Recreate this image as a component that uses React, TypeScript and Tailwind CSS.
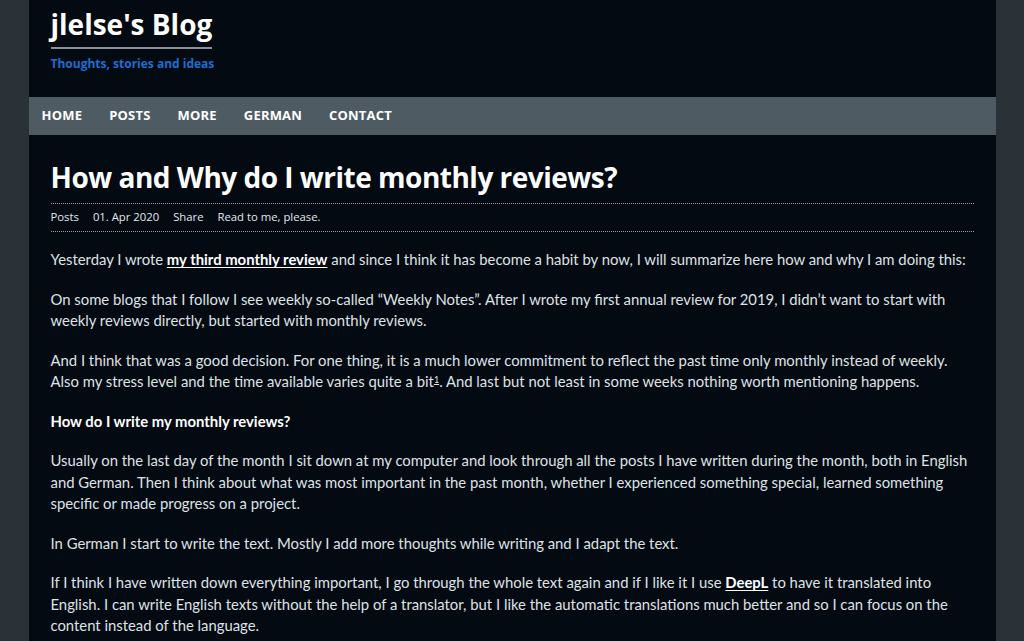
import React from 'react';

const navItems = ['Home', 'Posts', 'More', 'German', 'Contact'];

const A: React.FC<{ children: React.ReactNode }> = ({ children }) => (
  <a href="#" className="font-bold text-white underline underline-offset-2">
    {children}
  </a>
);

export default function App() {
  return (
    <div
      className="min-h-[641px] bg-[#2a3237] text-[#dfe2e5]"
      style={{ fontFamily: '"Open Sans", "Noto Sans", sans-serif' }}
    >
      <div className="mx-auto w-[967px] min-h-[641px] bg-[#030a12]">
        {/* header */}
        <header className="h-[97px] px-[22px] pt-[8px]">
          <a href="#" className="inline-block border-b-2 border-[#8a9096] pb-[6px] text-[28px] font-bold leading-[33px] text-white">
            jlelse's Blog
          </a>
          <p className="mt-[6px] text-[12px] font-bold leading-[18px] text-[#1c6fd0]">
            Thoughts, stories and ideas
          </p>
        </header>

        {/* nav */}
        <nav className="flex h-[38px] items-center gap-[27px] bg-[#4f5b63] pl-[13px]">
          {navItems.map((item) => (
            <a key={item} href="#" className="text-[13px] font-bold uppercase tracking-[0.2px] text-white">
              {item}
            </a>
          ))}
        </nav>

        {/* article */}
        <main className="px-[22px] pt-[25px]">
          <h1 className="pb-[9px] text-[28px] font-bold leading-[34px] tracking-[-0.5px] text-white">
            How and Why do I write monthly reviews?
          </h1>
          <div className="flex h-[29px] items-center gap-[14px] border-y border-dotted border-[#9aa0a6] text-[11.3px] text-[#e5e7ea]">
            <span>Posts</span>
            <span>01. Apr 2020</span>
            <span>Share</span>
            <span>Read to me, please.</span>
          </div>

          <div className="pt-[17px] text-[14.85px] leading-[21.5px]" style={{ fontFamily: 'Lato, sans-serif' }}>
            <p className="mb-[18px]">
              Yesterday I wrote <A>my third monthly review</A> and since I think it has become a habit by now, I will summarize here how and why I am doing this:
            </p>
            <p className="mb-[18px]">
              On some blogs that I follow I see weekly so-called “Weekly Notes”. After I wrote my first annual review for 2019, I didn’t want to start with weekly reviews directly, but started with monthly reviews.
            </p>
            <p className="mb-[18px]">
              And I think that was a good decision. For one thing, it is a much lower commitment to reflect the past time only monthly instead of weekly. Also my stress level and the time available varies quite a bit
              <sup className="text-[9px] underline">1</sup>. And last but not least in some weeks nothing worth mentioning happens.
            </p>
            <p className="mb-[18px] font-bold text-white">How do I write my monthly reviews?</p>
            <p className="mb-[18px]">
              Usually on the last day of the month I sit down at my computer and look through all the posts I have written during the month, both in English and German. Then I think about what was most important in the past month, whether I experienced something special, learned something specific or made progress on a project.
            </p>
            <p className="mb-[18px]">
              In German I start to write the text. Mostly I add more thoughts while writing and I adapt the text.
            </p>
            <p className="mb-[18px]">
              If I think I have written down everything important, I go through the whole text again and if I like it I use <A>DeepL</A> to have it translated into English. I can write English texts without the help of a translator, but I like the automatic translations much better and so I can focus on the content instead of the language.
            </p>
          </div>
        </main>
      </div>
    </div>
  );
}
